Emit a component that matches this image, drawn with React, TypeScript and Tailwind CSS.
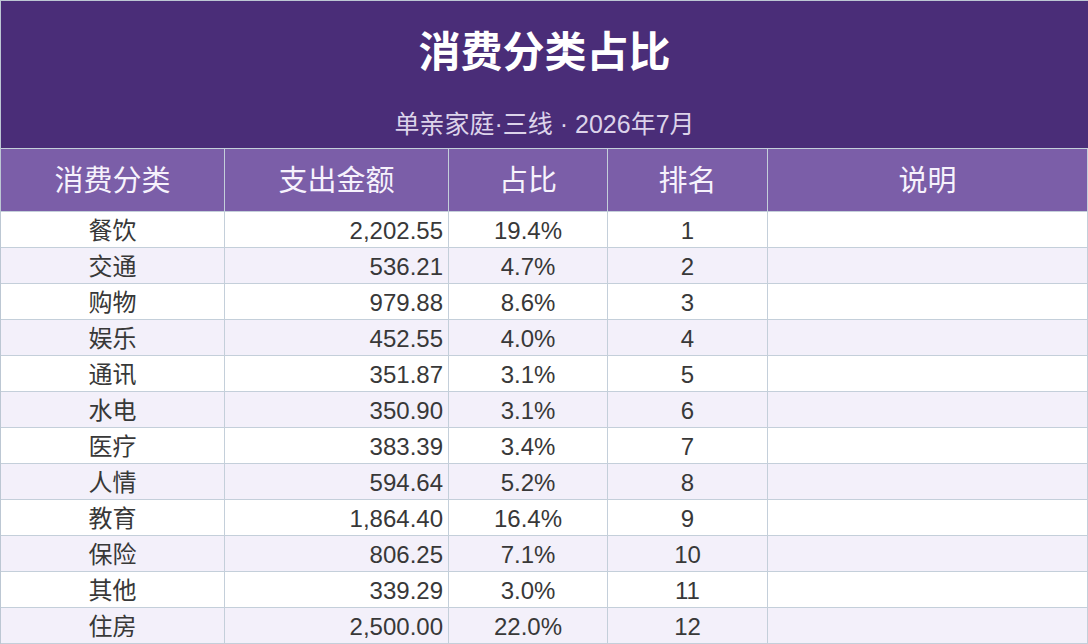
import React from "react";

const rows: [string, string, string, string][] = [
  ["餐饮", "2,202.55", "19.4%", "1"],
  ["交通", "536.21", "4.7%", "2"],
  ["购物", "979.88", "8.6%", "3"],
  ["娱乐", "452.55", "4.0%", "4"],
  ["通讯", "351.87", "3.1%", "5"],
  ["水电", "350.90", "3.1%", "6"],
  ["医疗", "383.39", "3.4%", "7"],
  ["人情", "594.64", "5.2%", "8"],
  ["教育", "1,864.40", "16.4%", "9"],
  ["保险", "806.25", "7.1%", "10"],
  ["其他", "339.29", "3.0%", "11"],
  ["住房", "2,500.00", "22.0%", "12"],
];

const font = { fontFamily: '"Liberation Sans", "Noto Sans CJK SC", sans-serif' };

export default function App() {
  return (
    <div
      className="w-[1088px] h-[644px] overflow-hidden bg-white border-l border-t border-[#bcc7d3]"
      style={font}
    >
      <div className="h-[148px] bg-[#4a2d78] flex flex-col items-center border-b border-[#c4cfda]">
        <div className="pt-[30px] text-[42px] leading-[44px] font-bold text-white">消费分类占比</div>
        <div className="mt-[34px] text-[25px] leading-[30px] text-[#dcd3ea]">单亲家庭·三线 · 2026年7月</div>
      </div>
      <div className="grid grid-cols-[224px_224px_159px_160px_320px]">
        {["消费分类", "支出金额", "占比", "排名", "说明"].map((h) => (
          <div
            key={h}
            className="h-[63px] pt-[4px] bg-[#7b5ea8] border-r border-b border-[#c4cfda] flex items-center justify-center text-[29px] text-[#f6f2fc]"
          >
            {h}
          </div>
        ))}
        {rows.map((r, i) => {
          const bg = i % 2 === 0 ? "bg-white" : "bg-[#f3f0fa]";
          return (
            <React.Fragment key={i}>
              <div className={`h-[36px] pt-[2px] ${bg} border-r border-b border-[#c4cfda] flex items-center justify-center text-[24px] text-[#383838]`}>
                {r[0]}
              </div>
              <div className={`h-[36px] pt-[2px] ${bg} border-r border-b border-[#c4cfda] flex items-center justify-end pr-[5px] text-[24px] text-[#383838]`}>
                {r[1]}
              </div>
              <div className={`h-[36px] pt-[2px] ${bg} border-r border-b border-[#c4cfda] flex items-center justify-center text-[24px] text-[#383838]`}>
                {r[2]}
              </div>
              <div className={`h-[36px] pt-[2px] ${bg} border-r border-b border-[#c4cfda] flex items-center justify-center text-[24px] text-[#383838]`}>
                {r[3]}
              </div>
              <div className={`h-[36px] ${bg} border-r border-b border-[#c4cfda]`} />
            </React.Fragment>
          );
        })}
      </div>
    </div>
  );
}
